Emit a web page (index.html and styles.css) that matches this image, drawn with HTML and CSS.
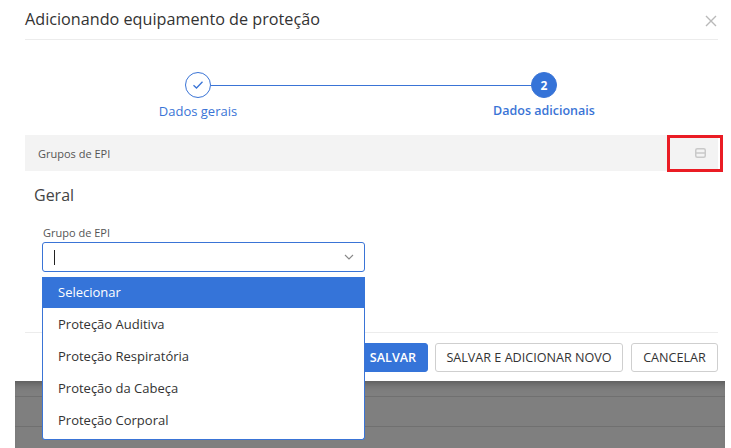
FILE: index.html
```html
<!DOCTYPE html>
<html>
  <head>
    <title>Adicionando equipamento de proteção</title>
    <link rel="stylesheet" href="styles.css">
  </head>
  <body>
    <div class="modal">
      <div class="modal-header">
        <h1 class="modal-title">Adicionando equipamento de proteção</h1>
        <span class="close">
          <svg width="12" height="12" viewBox="0 0 12 12"><path d="M1 1L11 11M11 1L1 11" stroke="#b9b9b9" stroke-width="1.4" fill="none"/></svg>
        </span>
      </div>

      <div class="stepper">
        <div class="step done">
          <div class="step-circle">
            <svg width="12" height="10" viewBox="0 0 12 10"><path d="M1.5 5.2L4.5 8L10.5 1.8" stroke="#3a74d6" stroke-width="1.3" fill="none"/></svg>
          </div>
          <div class="step-label">Dados gerais</div>
        </div>
        <div class="step-line"></div>
        <div class="step active">
          <div class="step-circle">2</div>
          <div class="step-label">Dados adicionais</div>
        </div>
      </div>

      <div class="section-bar">
        <span>Grupos de EPI</span>
        <span class="collapse">
          <svg width="11" height="10" viewBox="0 0 11 10"><rect x="0.75" y="0.75" width="9.5" height="8.5" rx="1.5" stroke="#c9c9c9" stroke-width="1.5" fill="none"/><path d="M1 5H10" stroke="#c9c9c9" stroke-width="1.5"/></svg>
        </span>
      </div>

      <h2 class="group-title">Geral</h2>

      <div class="field">
        <label class="field-label">Grupo de EPI</label>
        <div class="select">
          <span class="caret"></span>
          <svg class="chevron" width="10" height="6" viewBox="0 0 10 6"><path d="M1 1L5 5L9 1" stroke="#888" stroke-width="1.1" fill="none"/></svg>
        </div>
        <ul class="dropdown">
          <li class="selected">Selecionar</li>
          <li>Proteção Auditiva</li>
          <li>Proteção Respiratória</li>
          <li>Proteção da Cabeça</li>
          <li>Proteção Corporal</li>
        </ul>
      </div>

      <div class="modal-footer">
        <button class="btn btn-primary">SALVAR</button>
        <button class="btn btn-save-new">SALVAR E ADICIONAR NOVO</button>
        <button class="btn btn-cancel">CANCELAR</button>
      </div>
    </div>

    <div class="backdrop-page">
      <div class="page-rows">
        <div class="page-row"></div>
        <div class="page-row"></div>
      </div>
    </div>
  </body>
</html>
```

FILE: styles.css
```css
body {
  margin: 0;
  background: #fff;
  font-family: "Open Sans", "Noto Sans", sans-serif;
  color: #333;
  height: 448px;
  overflow: hidden;
}

.modal {
  background: #fff;
  height: 381px;
  box-sizing: border-box;
  position: relative;
}

.modal-header {
  display: flex;
  align-items: center;
  justify-content: space-between;
  margin: 0 13px 0 25px;
  height: 40px;
  border-bottom: 1px solid #ececec;
  box-sizing: border-box;
}

.modal-title {
  margin: 0;
  font-size: 16.2px;
  font-weight: 400;
  color: #333;
  line-height: 24px;
  padding-bottom: 2px;
}

.close {
  display: flex;
  margin-right: 1px;
  margin-top: 3px;
}

.stepper {
  display: flex;
  align-items: flex-start;
  padding: 32px 0 0 158px;
  height: 95px;
  box-sizing: border-box;
}

.step {
  display: flex;
  flex-direction: column;
  align-items: center;
  width: 80px;
}

.step.active {
  width: 110px;
}

.step-circle {
  width: 26px;
  height: 26px;
  border-radius: 50%;
  border: 1px solid #3a74d6;
  box-sizing: border-box;
  display: flex;
  align-items: center;
  justify-content: center;
  font-size: 12px;
  font-weight: 700;
  color: #fff;
}

.step.active .step-circle {
  background: #3573d8;
}

.step-label {
  margin-top: 4px;
  font-size: 13px;
  line-height: 18px;
  color: #3a74d6;
  white-space: nowrap;
}

.step.active .step-label {
  font-weight: 600;
  font-size: 12.5px;
}

.step-line {
  flex: none;
  width: 321px;
  height: 1px;
  background: #3a74d6;
  margin-top: 13px;
  margin-left: -27px;
  margin-right: -43px;
}

.section-bar {
  display: flex;
  align-items: center;
  justify-content: space-between;
  margin: 0 13px 0 25px;
  height: 36px;
  padding: 0 12px 0 13px;
  background: #f3f3f3;
  font-size: 11px;
  color: #555;
}

.collapse {
  display: flex;
  position: relative;
}

.collapse::after {
  content: "";
  position: absolute;
  left: -28px;
  top: -13px;
  width: 50px;
  height: 31px;
  border: 3px solid #ea1c24;
}

.group-title {
  margin: 13px 0 0 34px;
  font-size: 16px;
  font-weight: 400;
  color: #444;
  line-height: 22px;
}

.field {
  margin: 19px 0 0 42px;
  width: 323px;
  position: relative;
}

.field-label {
  display: block;
  font-size: 11px;
  color: #555;
  padding-left: 1px;
  line-height: 16px;
}

.select {
  margin-top: 1px;
  height: 30px;
  border: 1px solid #3a74d6;
  border-radius: 3px;
  box-sizing: border-box;
  display: flex;
  align-items: center;
  justify-content: space-between;
  padding: 0 10px 0 11px;
}

.caret {
  width: 1px;
  height: 15px;
  background: #222;
}

.dropdown {
  position: absolute;
  left: 0;
  top: 52px;
  width: 323px;
  margin: 0;
  padding: 0 0 3px;
  list-style: none;
  background: #fff;
  border: 1px solid #3a74d6;
  border-top: none;
  border-radius: 0 0 3px 3px;
  box-sizing: border-box;
  z-index: 2;
}

.dropdown li {
  height: 32px;
  line-height: 32px;
  padding-left: 15px;
  font-size: 13px;
  color: #333;
}

.dropdown li.selected {
  background: #3574d9;
  color: #fff;
  height: 31px;
  line-height: 31px;
  margin: 0 -1px;
  padding-left: 16px;
}

.modal-footer {
  position: absolute;
  left: 25px;
  right: 13px;
  top: 332px;
  border-top: 1px solid #ececec;
  display: flex;
  justify-content: flex-end;
  gap: 8px;
  padding-top: 10px;
}

.btn {
  height: 29px;
  padding: 0;
  border: 1px solid #cfcfcf;
  border-radius: 3px;
  background: #fff;
  font-family: "Open Sans", "Noto Sans", sans-serif;
  font-size: 12.6px;
  color: #333;
  white-space: nowrap;
}

.btn-primary {
  width: 74px;
  background: #3574d9;
  border-color: #3574d9;
  color: #fff;
  font-weight: 600;
  padding-left: 4px;
  margin-right: -1px;
}

.btn-save-new {
  width: 188px;
}

.btn-cancel {
  width: 87px;
}

.backdrop-page {
  height: 67px;
  padding: 0 6px 0 15px;
}

.page-rows {
  height: 100%;
  background: #7f7f7f;
  box-shadow: inset 0 8px 8px -6px rgba(0, 0, 0, 0.35);
  padding-top: 15px;
  box-sizing: border-box;
}

.page-row {
  height: 30px;
  border-top: 1px solid #707070;
  box-sizing: border-box;
}
```
